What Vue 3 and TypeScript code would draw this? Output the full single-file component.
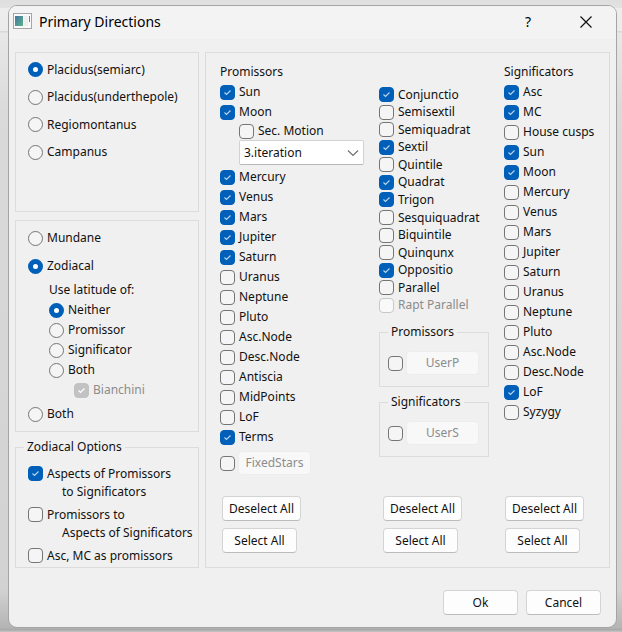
<script setup lang="ts">
import { reactive, ref } from 'vue'

interface Option {
  label: string
  checked: boolean
  disabled?: boolean
}

const make = (labels: string[], on: string[]): Option[] =>
  labels.map((label) => ({ label, checked: on.includes(label) }))

const systems = ['Placidus(semiarc)', 'Placidus(underthepole)', 'Regiomontanus', 'Campanus']
const latitudes = ['Neither', 'Promissor', 'Significator', 'Both']

const system = ref(systems[0])
const plane = ref('Zodiacal')
const latitude = ref('Neither')
const bianchini = ref(true)
const aspectsOfPromissors = ref(true)
const promissorsToAspects = ref(false)
const anglesAsPromissors = ref(false)
const secondaryMotion = ref(false)
const iteration = ref('3.iteration')
const fixedStars = ref(false)
const userP = ref(false)
const userS = ref(false)

const luminaries = reactive(make(['Sun', 'Moon'], ['Sun', 'Moon']))
const promissors = reactive(
  make(
    ['Mercury', 'Venus', 'Mars', 'Jupiter', 'Saturn', 'Uranus', 'Neptune', 'Pluto', 'Asc.Node', 'Desc.Node', 'Antiscia', 'MidPoints', 'LoF', 'Terms'],
    ['Mercury', 'Venus', 'Mars', 'Jupiter', 'Saturn', 'Terms'],
  ),
)
const aspects = reactive<Option[]>([
  ...make(
    ['Conjunctio', 'Semisextil', 'Semiquadrat', 'Sextil', 'Quintile', 'Quadrat', 'Trigon', 'Sesquiquadrat', 'Biquintile', 'Quinqunx', 'Oppositio', 'Parallel'],
    ['Conjunctio', 'Sextil', 'Quadrat', 'Trigon', 'Oppositio'],
  ),
  { label: 'Rapt Parallel', checked: false, disabled: true },
])
const significators = reactive(
  make(
    ['Asc', 'MC', 'House cusps', 'Sun', 'Moon', 'Mercury', 'Venus', 'Mars', 'Jupiter', 'Saturn', 'Uranus', 'Neptune', 'Pluto', 'Asc.Node', 'Desc.Node', 'LoF', 'Syzygy'],
    ['Asc', 'MC', 'Sun', 'Moon', 'LoF'],
  ),
)

const groups: Option[][][] = [[luminaries, promissors], [aspects], [significators]]

function setAll(group: Option[][], value: boolean) {
  group.flat().forEach((option) => {
    if (!option.disabled) option.checked = value
  })
}
</script>

<template>
  <div class="desktop">
    <main class="dialog">
      <header class="titlebar">
        <svg class="app-icon" viewBox="0 0 19 16" aria-hidden="true">
          <defs>
            <linearGradient id="pane" x1="0" y1="0" x2="1" y2="1">
              <stop offset="0" stop-color="#4376a4" />
              <stop offset="1" stop-color="#5cb287" />
            </linearGradient>
          </defs>
          <rect x="0.5" y="0.5" width="18" height="15" fill="#fafafa" stroke="#a2a6aa" />
          <rect x="2" y="3" width="8" height="10" fill="url(#pane)" />
          <rect x="11" y="3" width="4" height="10" fill="#efeff2" />
          <path d="M16.5 3v6" stroke="#4a93a0" />
        </svg>
        <h1>Primary Directions</h1>
        <button class="caption help" type="button" aria-label="Help">?</button>
        <button class="caption close" type="button" aria-label="Close">
          <svg viewBox="0 0 12 12" aria-hidden="true"><path d="M0.5 0.5l11 11M11.5 0.5l-11 11" /></svg>
        </button>
      </header>

      <div class="content">
        <div class="side">
          <section class="box systems">
            <div class="system-list">
              <label v-for="name in systems" :key="name" class="line">
                <input v-model="system" type="radio" name="system" :value="name" />{{ name }}
              </label>
            </div>
          </section>

          <section class="box planes">
            <label class="row tall"><input v-model="plane" type="radio" name="plane" value="Mundane" />Mundane</label>
            <label class="row tall"><input v-model="plane" type="radio" name="plane" value="Zodiacal" />Zodiacal</label>
            <div class="nested">
              <div class="row">Use latitude of:</div>
              <label v-for="name in latitudes" :key="name" class="row">
                <input v-model="latitude" type="radio" name="latitude" :value="name" />{{ name }}
              </label>
              <label class="row deep off"><input v-model="bianchini" type="checkbox" disabled />Bianchini</label>
            </div>
            <label class="row tall"><input v-model="plane" type="radio" name="plane" value="Both" />Both</label>
          </section>

          <fieldset class="zodiacal">
            <legend>Zodiacal Options</legend>
            <label class="pair">
              <input v-model="aspectsOfPromissors" type="checkbox" />
              <span>Aspects of Promissors<span class="second">to Significators</span></span>
            </label>
            <label class="pair">
              <input v-model="promissorsToAspects" type="checkbox" />
              <span>Promissors to<span class="second">Aspects of Significators</span></span>
            </label>
            <label class="pair">
              <input v-model="anglesAsPromissors" type="checkbox" />
              <span>Asc, MC as promissors</span>
            </label>
          </fieldset>
        </div>

        <section class="box bodies">
          <div class="columns">
            <div>
              <h2 class="row">Promissors</h2>
              <label v-for="o in luminaries" :key="o.label" class="row">
                <input v-model="o.checked" type="checkbox" />{{ o.label }}
              </label>
              <div class="motion">
                <label class="row short"><input v-model="secondaryMotion" type="checkbox" />Sec. Motion</label>
                <select v-model="iteration" aria-label="Iteration">
                  <option>1.iteration</option>
                  <option>2.iteration</option>
                  <option>3.iteration</option>
                </select>
              </div>
              <label v-for="o in promissors" :key="o.label" class="row">
                <input v-model="o.checked" type="checkbox" />{{ o.label }}
              </label>
              <div class="custom stars">
                <input v-model="fixedStars" type="checkbox" aria-label="FixedStars" />
                <button type="button" disabled>FixedStars</button>
              </div>
            </div>

            <div class="middle">
              <div class="aspects">
                <label v-for="o in aspects" :key="o.label" class="line" :class="{ off: o.disabled }">
                  <input v-model="o.checked" type="checkbox" :disabled="o.disabled" />{{ o.label }}
                </label>
              </div>
              <fieldset class="user">
                <legend>Promissors</legend>
                <div class="custom">
                  <input v-model="userP" type="checkbox" aria-label="UserP" />
                  <button type="button" disabled>UserP</button>
                </div>
              </fieldset>
              <fieldset class="user">
                <legend>Significators</legend>
                <div class="custom">
                  <input v-model="userS" type="checkbox" aria-label="UserS" />
                  <button type="button" disabled>UserS</button>
                </div>
              </fieldset>
            </div>

            <div>
              <h2 class="row">Significators</h2>
              <label v-for="o in significators" :key="o.label" class="row">
                <input v-model="o.checked" type="checkbox" />{{ o.label }}
              </label>
            </div>
          </div>

          <div class="bulk">
            <div v-for="(group, i) in groups" :key="i" class="bulk-pair">
              <button class="wide" type="button" @click="setAll(group, false)">Deselect All</button>
              <button type="button" @click="setAll(group, true)">Select All</button>
            </div>
          </div>
        </section>
      </div>

      <footer class="actions">
        <button type="button">Ok</button>
        <button type="button">Cancel</button>
      </footer>
    </main>
  </div>
</template>

<style>
body {
  margin: 0;
}
</style>

<style scoped>
* {
  box-sizing: border-box;
}

.desktop {
  display: flex;
  min-height: 100vh;
  padding: 5px 5px 4px 8px;
  background: linear-gradient(#dedede 0, #e2e2e2 8px, #ededed 8px, #ebebeb 31px, #d8d8d8 31px, #d8d8d8 32px, #e8e8e8 33px, #dadada 110px, #d2d2d2 590px, #b4b4b4 628px, #a6a6a6 630px, #c0c0c0 631px);
  color: #111;
  font: 12px/18px "Noto Sans", sans-serif;
}

.dialog {
  display: flex;
  flex: 1;
  flex-direction: column;
  border: 1px solid #a4a4a4;
  border-radius: 9px;
  background: #f0f0f0;
  overflow: hidden;
}

.titlebar {
  display: flex;
  align-items: center;
  height: 33px;
  padding-left: 4px;
  background: #f3f3f3;
  color: #000;
}

.app-icon {
  width: 19px;
  height: 16px;
  margin: 0 7px 4px 0;
}

h1 {
  flex: 1;
  margin: 0 0 2px;
  font-size: 14px;
  font-weight: 400;
}

.content {
  display: grid;
  grid-template-columns: 184fr 405fr;
  gap: 6px;
  padding: 13px 6px 0;
}

.box,
fieldset {
  margin: 0;
  border: 1px solid #dcdcdc;
}

.side {
  display: flex;
  flex-direction: column;
}

.systems {
  height: 160px;
  margin-bottom: 8px;
  padding: 3px 12px;
}

.system-list {
  display: grid;
  grid-template-rows: repeat(4, 1fr);
  height: 110px;
}

.planes {
  margin-bottom: 6px;
  padding: 3px 12px;
}

.nested {
  padding-left: 21px;
}

.deep {
  padding-left: 25px;
}

.row,
.line,
.pair {
  display: flex;
  align-items: center;
  gap: 4px;
  white-space: nowrap;
}

.row {
  height: 20px;
}

.row.tall {
  height: 28px;
}

.row.short {
  height: 18px;
}

.off {
  color: #8c8c8c;
}

h2 {
  margin: 0;
  font-size: 12px;
  font-weight: 400;
}

legend {
  height: 18px;
  padding: 0 3px;
}

.zodiacal {
  display: flex;
  flex-direction: column;
  gap: 5px;
  padding: 9px 0 2px 12px;
}

.zodiacal legend {
  margin-left: -4px;
}

.pair {
  align-items: flex-start;
}

.pair input {
  margin-top: 1px;
}

.second {
  display: block;
  padding-left: 15px;
}

input {
  flex: none;
  appearance: none;
  width: 15px;
  height: 15px;
  margin: 0;
  border: 1px solid #757575;
  border-radius: 4px;
  background: #f5f5f5;
}

input[type="radio"] {
  border-radius: 50%;
}

input[type="radio"]:checked {
  border: 5px solid #005fb8;
  background: #fff;
}

input[type="checkbox"]:checked {
  border-color: #005fb8;
  background: #005fb8 url("data:image/svg+xml,%3Csvg xmlns='http://www.w3.org/2000/svg' viewBox='0 0 13 13'%3E%3Cpath d='M3.5 6.5l2 2 4-4' fill='none' stroke='%23b8d6f0' stroke-width='1.1'/%3E%3C/svg%3E") center / 13px 13px no-repeat;
}

input:disabled {
  border-color: #c8c8c8;
  background-color: #f9f9f9;
}

input[type="checkbox"]:checked:disabled {
  border-color: #c2c2c2;
  background: #c2c2c2 url("data:image/svg+xml,%3Csvg xmlns='http://www.w3.org/2000/svg' viewBox='0 0 13 13'%3E%3Cpath d='M3.5 6.5l2 2 4-4' fill='none' stroke='%23fff' stroke-width='1.2'/%3E%3C/svg%3E") center / 13px 13px no-repeat;
}

.bodies {
  display: flex;
  flex-direction: column;
  padding: 9px 0 14px 14px;
}

.columns {
  display: grid;
  grid-template-columns: 159fr 125fr 105fr;
}

.motion {
  margin-bottom: 2px;
  padding-left: 19px;
}

select {
  display: block;
  appearance: none;
  width: 125px;
  height: 25px;
  padding: 0 4px;
  border: 1px solid #d2d2d2;
  border-bottom-color: #b8b8b8;
  border-radius: 2px;
  background: #fff url("data:image/svg+xml,%3Csvg xmlns='http://www.w3.org/2000/svg' viewBox='0 0 12 8'%3E%3Cpath d='M1 1.5l5 5 5-5' fill='none' stroke='%23707070' stroke-width='1.2'/%3E%3C/svg%3E") right 4px center / 12px 8px no-repeat;
  color: #111;
  font: inherit;
}

.middle {
  padding-top: 24px;
}

.aspects {
  display: grid;
  grid-template-rows: repeat(13, 1fr);
  height: 228px;
  margin-bottom: 9px;
}

.line {
  min-height: 0;
}

.user {
  width: 110px;
  height: 64px;
  margin-bottom: 6px;
  padding: 10px 8px 0;
}

.custom {
  display: flex;
  align-items: center;
  gap: 3px;
}

.stars {
  margin-top: 4px;
}

button {
  width: 75px;
  height: 25px;
  padding: 0;
  border: 1px solid #d4d4d4;
  border-bottom-color: #bcbcbc;
  border-radius: 4px;
  background: #fdfdfd;
  color: #111;
  font: inherit;
  text-align: center;
}

.wide {
  width: 79px;
}

.custom button {
  width: 73px;
  height: 24px;
  border-color: #ededed;
  background: #f8f8f8;
  color: #8c8c8c;
}

.bulk {
  display: grid;
  grid-template-columns: 161fr 122fr 104fr;
  margin-top: auto;
  padding-left: 2px;
}

.bulk-pair {
  display: flex;
  flex-direction: column;
  gap: 7px;
}

.actions {
  display: flex;
  justify-content: flex-end;
  gap: 8px;
  margin-top: auto;
  padding: 20px 15px 12px;
}

.caption {
  display: grid;
  place-items: center;
  height: 32px;
  border: 0;
  background: none;
  color: #000;
  font-size: 14px;
}

.caption svg {
  width: 12px;
  height: 12px;
  fill: none;
  stroke: #111;
  stroke-width: 1.2;
}

.help {
  width: 56px;
  padding-bottom: 2px;
}

.close {
  width: 60px;
  padding-bottom: 2px;
}
</style>
